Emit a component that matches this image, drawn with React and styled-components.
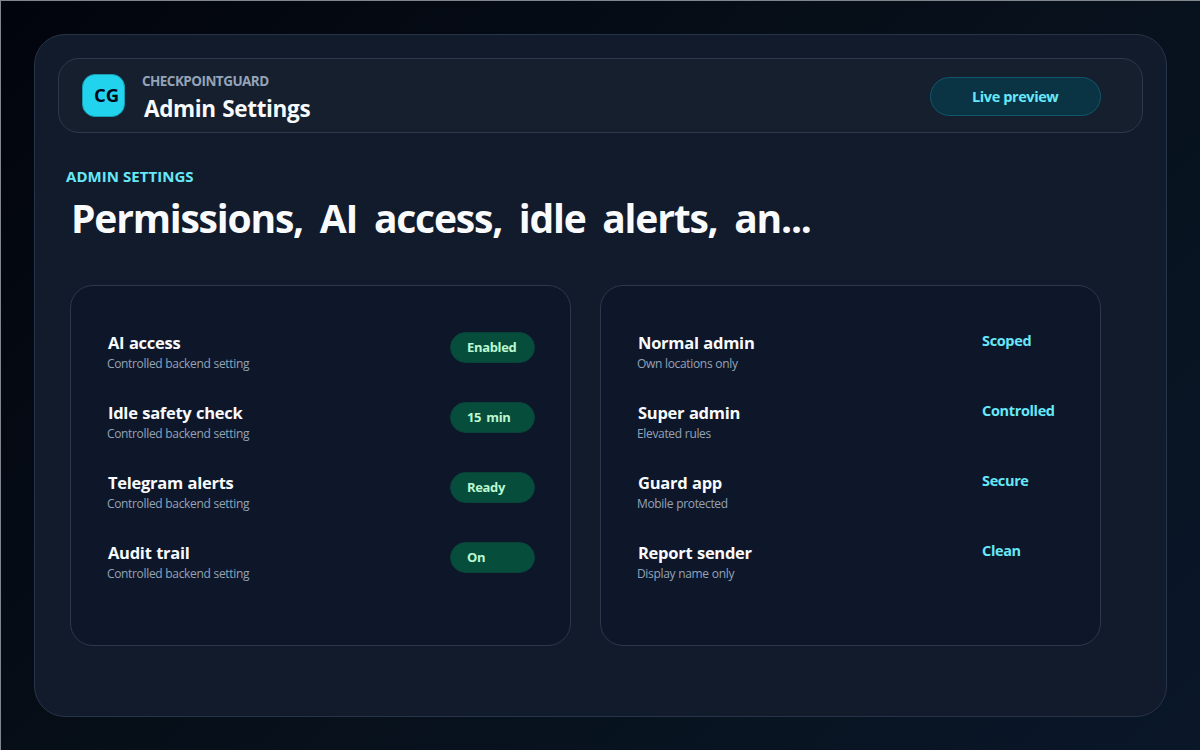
import React from "react";
import styled, { createGlobalStyle } from "styled-components";

const GlobalStyle = createGlobalStyle`
  * { box-sizing: border-box; }
  body {
    margin: 0;
    font-family: "Open Sans", "Noto Sans", sans-serif;
    background: #030712;
  }
`;

const Page = styled.div`
  width: 1200px;
  height: 750px;
  padding: 33px;
  border-top: 1px solid #80868b;
  border-left: 1px solid #80868b;
  background: linear-gradient(135deg, #02040d 0%, #07101a 50%, #0a1729 100%);
`;

const Shell = styled.main`
  width: 1133px;
  height: 683px;
  padding: 23px;
  border: 1px solid #263449;
  border-radius: 31px;
  background: #121b2b;
`;

const Header = styled.header`
  display: flex;
  align-items: flex-start;
  height: 75px;
  padding: 15px 41px 0 23px;
  border: 1px solid #2c394b;
  border-radius: 21px;
  background: #151f2d;
`;

const Text = styled.span`
  display: block;
  white-space: pre;
  font-size: ${(p) => p.$size}px;
  line-height: ${(p) => p.$line}px;
  font-weight: ${(p) => p.$weight || 700};
  letter-spacing: ${(p) => p.$track || 0}px;
  word-spacing: ${(p) => p.$gap || 0}px;
  color: ${(p) => p.$color || "#f8fafc"};
`;

const Logo = styled.div`
  display: flex;
  width: 43px;
  height: 43px;
  padding: 8px 0 0 11px;
  border: 1px solid #1a9db3;
  border-radius: 13px;
  background: #22d3ee;
`;

const Brand = styled.div`
  margin-left: 17px;
  flex: 1;
`;

const BrandTitle = styled.div`
  padding: 2px 0 0 2px;
`;

const PreviewPill = styled.div`
  display: flex;
  width: 171px;
  height: 39px;
  margin-top: 3px;
  padding: 8px 0 0 41px;
  border: 1px solid #11576c;
  border-radius: 20px;
  background: #0a3444;
`;

const Intro = styled.section`
  height: 152px;
  padding: 33px 0 0 8px;
`;

const Headline = styled.h1`
  margin: 4px 0 0 5px;
  font-size: 39px;
  line-height: 54px;
  font-weight: 700;
  color: #f8fafc;
  white-space: pre;
  letter-spacing: -1.2px;
  word-spacing: 7.8px;
`;

const Cards = styled.section`
  display: flex;
  gap: 29px;
  padding-left: 12px;
`;

const Card = styled.div`
  width: 501px;
  height: 361px;
  padding: 45px 35px 0 36px;
  border: 1px solid #2c394b;
  border-radius: 23px;
  background: #0e172a;
`;

const Row = styled.div`
  display: flex;
  justify-content: space-between;
  height: 70px;
`;

const RowName = styled.div`
  padding-left: 1px;
`;

const Badge = styled.div`
  width: 85px;
  height: 31px;
  margin-top: 1px;
  padding: 4px 0 0 16px;
  border: 1px solid #094239;
  border-radius: 16px;
  background: #064e3b;
`;

const Scope = styled.div`
  width: 83px;
`;

const settings = [
  { name: "AI access", value: "Enabled" },
  { name: "Idle safety check", value: "15 min" },
  { name: "Telegram alerts", value: "Ready" },
  { name: "Audit trail", value: "On" },
];

const roles = [
  { name: "Normal admin", note: "Own locations only", value: "Scoped" },
  { name: "Super admin", note: "Elevated rules", value: "Controlled" },
  { name: "Guard app", note: "Mobile protected", value: "Secure" },
  { name: "Report sender", note: "Display name only", value: "Clean" },
];

function Label({ name, note }) {
  return (
    <div>
      <RowName>
        <Text $size={16.5} $line={24} $track={-0.27} $gap={0.6}>{name}</Text>
      </RowName>
      <Text $size={12} $line={18} $weight={400} $track={-0.34} $gap={0.3} $color="#94a3b8">{note}</Text>
    </div>
  );
}

export default function App() {
  return (
    <>
      <GlobalStyle />
      <Page>
        <Shell>
          <Header>
            <Logo>
              <Text $size={18.5} $line={24} $track={-0.1} $color="#020617">CG</Text>
            </Logo>
            <Brand>
              <Text $size={13.5} $line={14} $track={-0.54} $color="#94a3b8">CHECKPOINTGUARD</Text>
              <BrandTitle>
                <Text $size={22.5} $line={38} $track={-0.35} $gap={1}>Admin Settings</Text>
              </BrandTitle>
            </Brand>
            <PreviewPill>
              <Text $size={14.5} $line={22} $track={-0.4} $color="#67e8f9">Live preview</Text>
            </PreviewPill>
          </Header>
          <Intro>
            <Text $size={15} $line={21} $track={0.05} $color="#67e8f9">ADMIN SETTINGS</Text>
            <Headline>Permissions, AI access, idle alerts, an...</Headline>
          </Intro>
          <Cards>
            <Card>
              {settings.map((s) => (
                <Row key={s.name}>
                  <Label name={s.name} note="Controlled backend setting" />
                  <Badge>
                    <Text $size={13} $line={21} $track={-0.33} $gap={2} $color="#bbf7d0">{s.value}</Text>
                  </Badge>
                </Row>
              ))}
            </Card>
            <Card>
              {roles.map((r) => (
                <Row key={r.name}>
                  <Label name={r.name} note={r.note} />
                  <Scope>
                    <Text $size={14.5} $line={19} $track={-0.35} $color="#67e8f9">{r.value}</Text>
                  </Scope>
                </Row>
              ))}
            </Card>
          </Cards>
        </Shell>
      </Page>
    </>
  );
}
